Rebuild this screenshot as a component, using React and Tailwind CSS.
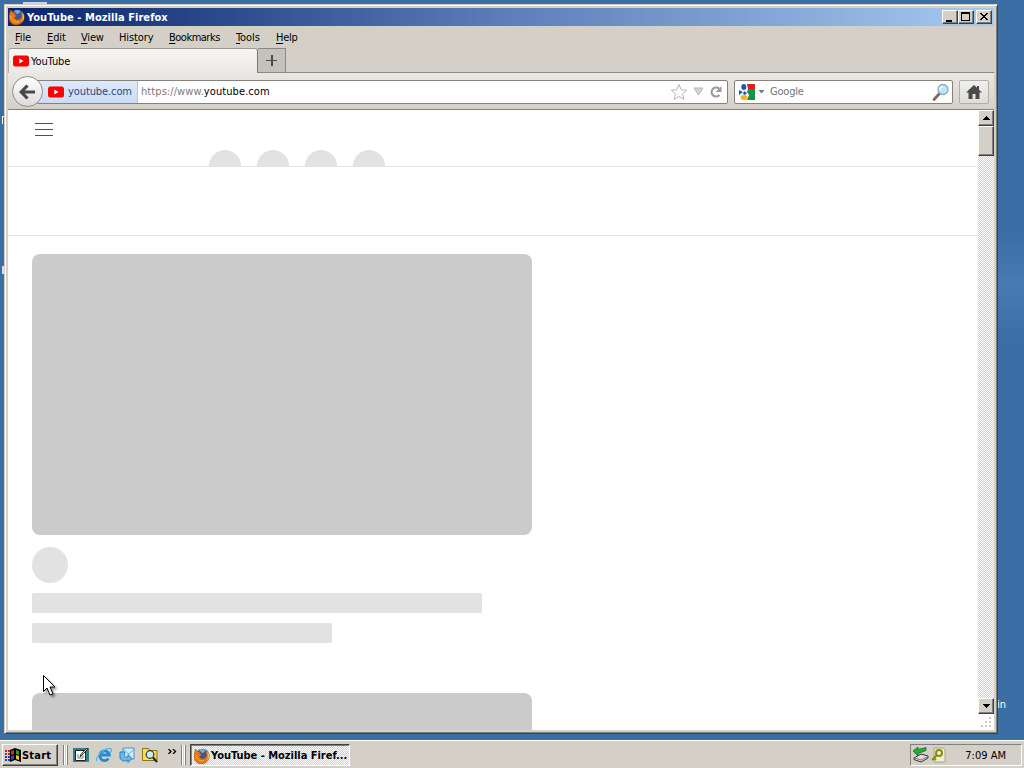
const MENU = [
  { label: "File", box: "w-[32px] tracking-[-0.1px]" },
  { label: "Edit", box: "w-[34px] tracking-[-0.1px]" },
  { label: "View", box: "w-[38px] tracking-[-0.2px]" },
  { label: "History", box: "w-[50px] tracking-[-0.1px]", hot: 3 },
  { label: "Bookmarks", box: "w-[67px] tracking-[-0.5px]" },
  { label: "Tools", box: "w-[40px] tracking-[-0.1px]" },
  { label: "Help", box: "w-[30px] tracking-[-0.3px]" },
];

const RAISED = "bg-[#d4d0c8] border border-t-white border-l-white border-r-[#404040] border-b-[#404040] shadow-[inset_-1px_-1px_0_#808080]";

export default function App() {
  return (
    <div className="relative w-[1024px] h-[768px] overflow-hidden bg-[#3a6ea5] flex flex-col justify-between text-[11px] leading-[14px] text-black font-['DejaVu_Sans_Condensed','DejaVu_Sans',sans-serif] [font-stretch:condensed]">
      {/* desktop icons peeking out behind the window */}
      <div className="absolute left-[23px] top-[2px] w-[24px] h-[2px] bg-[#c9d6ea]" />
      <div className="absolute left-[2px] top-[116px] w-[3px] h-[8px] border-l border-t border-white" />
      <div className="absolute left-[2px] top-[266px] w-[2px] h-[8px] bg-[#d5e0ec]" />
      <div className="absolute left-[997px] top-[698px] text-white">in</div>
      <div className="absolute left-[998px] top-[230px] w-[26px] h-[110px] bg-linear-to-b from-[#3a6ea5] via-[#467ab1] to-[#3a6ea5]" />

      <BrowserWindow />
      <Taskbar />
      <Cursor />
    </div>
  );
}

function BrowserWindow() {
  return (
    <div className="relative ml-[4px] mt-[4px] w-[994px] h-[730px] flex flex-col bg-[#d4d0c8] border border-[#d4d0c8] border-r-[#404040] border-b-[#404040] shadow-[inset_1px_1px_0_#fff,inset_-1px_-1px_0_#808080] p-[3px]">
      <TitleBar />
      <div className="h-[22px] shrink-0 flex items-center pl-[7px] pt-[2px]">
        {MENU.map(m => <MenuItem key={m.label} {...m} />)}
      </div>
      <TabStrip />
      <NavBar />
      <div className="flex-1 min-h-0 flex bg-white">
        <Page />
        <Scrollbar />
      </div>
    </div>
  );
}

function TitleBar() {
  return (
    <div className="h-[18px] shrink-0 flex items-center pl-[1px] pr-[2px] bg-linear-to-r from-[#0a246a] via-[#5c7db8] to-[#a6caf0]">
      <FirefoxIcon />
      <span className="ml-[2px] mt-[2px] text-white font-bold text-[11px] tracking-[0.06px] whitespace-nowrap">
        YouTube - Mozilla Firefox
      </span>
      <div className="ml-auto flex">
        <div className={`w-[16px] h-[14px] ${RAISED}`}>
          <div className="w-[6px] h-[2px] bg-black mt-[9px] ml-[3px]" />
        </div>
        <div className={`w-[16px] h-[14px] ${RAISED}`}>
          <div className="w-[9px] h-[9px] border border-t-2 border-black mt-[1px] ml-[2px]" />
        </div>
        <div className={`w-[16px] h-[14px] ml-[2px] ${RAISED}`}>
          <svg className="w-[8px] h-[7px] mt-[2px] ml-[3px]" viewBox="0 0 8 7" shapeRendering="crispEdges">
            <path d="M0 0h2v1h1v1h2V1h1V0h2v1H7v1H6v1H5v1h1v1h1v1h1v1H6V6H5V5H3v1H2v1H0V6h1V5h1V4h1V3H2V2H1V1H0z" />
          </svg>
        </div>
      </div>
    </div>
  );
}

function MenuItem({ label, box, hot = 0 }) {
  return (
    <div className={`${box} shrink-0 whitespace-nowrap`}>
      {label.slice(0, hot)}
      <span className="underline underline-offset-2 decoration-1">{label[hot]}</span>
      {label.slice(hot + 1)}
    </div>
  );
}

function TabStrip() {
  return (
    <div className="h-[25px] shrink-0 flex border-b border-[#8c8a86]">
      <div className="w-[250px] h-[25px] flex items-center pl-[4px] rounded-t-[3px] bg-linear-to-b from-[#f6f5f3] to-[#ebe9e5] border border-b-0 border-t-[#9a9894] border-l-[#b5b2ac] border-r-[#777]">
        <YouTubeIcon />
        <span className="ml-[2px] mt-[2px] tracking-[-0.1px]">YouTube</span>
      </div>
      <div className="w-[28px] h-[25px] flex items-center justify-center bg-[#c5c2bb] border border-l-0 border-[#8a8883]">
        <svg width="11" height="11" viewBox="0 0 11 11" shapeRendering="crispEdges">
          <path d="M5 0h2v5h4v1H7v5H5V6H0V5h5z" fill="#4b4b4b" />
        </svg>
      </div>
    </div>
  );
}

function NavBar() {
  return (
    <div className="h-[37px] shrink-0 flex items-center bg-linear-to-b from-[#ebe8e4] to-[#d4d0c8] border-b border-[#85827c] pt-[1px] pl-[4px] pr-[5px]">
      <div className="relative z-10 w-[31px] h-[31px] shrink-0 rounded-full border border-[#8f8d89] bg-linear-to-b from-white to-[#dddbd8] flex items-center justify-center">
        <svg width="17" height="16" viewBox="0 0 17 16">
          <path d="M8.500 1.500L2.200 8l6.300 6.500M2.500 8H16" fill="none" stroke="#45494c" strokeWidth="3.200" />
        </svg>
      </div>
      <div className="-ml-[6px] w-[691px] h-[24px] flex items-center bg-white border border-[#85827e] rounded-r-[2px]">
        <div className="h-full w-[100px] shrink-0 flex items-center pl-[10px] bg-linear-to-b from-[#dfe9fa] to-[#cbdcf5] border-r border-[#b5c5e4]">
          <YouTubeIcon />
          <span className="ml-[4px] mt-[1px] tracking-[-0.1px] text-[#1f4a83]">youtube.com</span>
        </div>
        <span className="ml-[3px] mt-[1px] tracking-[0.08px] text-[#7b7b7b] whitespace-nowrap">
          https://www.<span className="text-black">youtube.com</span>
        </span>
        <div className="ml-auto flex items-center pr-[4px]">
          <svg width="18" height="18" viewBox="0 0 18 18">
            <path d="M9 1.500l2.200 5.200 5.500.5-4.200 3.700 1.300 5.500L9 13.500l-4.800 2.900 1.300-5.500L1.300 7.200l5.500-.5z" fill="#fdfdfd" stroke="#b8b8b8" />
          </svg>
          <svg className="ml-[5px]" width="11" height="9" viewBox="0 0 11 9">
            <path d="M1 1h9L5.500 8z" fill="#d6d6d6" stroke="#b5b5b5" />
          </svg>
          <svg className="ml-[5px]" width="14" height="14" viewBox="0 0 14 14">
            <path d="M10.500 10A4.500 4.500 0 1 1 10 3.500" fill="none" stroke="#999" strokeWidth="2.200" />
            <path d="M12.500 1v6h-6z" fill="#999" />
          </svg>
        </div>
      </div>
      <div className="ml-[6px] w-[219px] h-[24px] flex items-center bg-white border border-[#85827e] rounded-[2px] pl-[4px] pr-[2px]">
        <GoogleIcon />
        <svg className="ml-[3px]" width="7" height="4" viewBox="0 0 7 4"><path d="M.5 0h6l-3 3.500z" fill="#777" /></svg>
        <span className="ml-[5px] mt-[1px] tracking-[-0.2px] text-[#757575]">Google</span>
        <svg className="ml-auto" width="18" height="18" viewBox="0 0 18 18">
          <path d="M7.500 10.500l-5.500 6" stroke="#83675a" strokeWidth="2.800" strokeLinecap="round" />
          <circle cx="11" cy="6.500" r="5" fill="#b9e8f4" stroke="#91a9bd" strokeWidth="1.300" />
          <path d="M8 6.500a3 3 0 0 1 3-3" fill="none" stroke="#fff" strokeWidth="1.500" />
        </svg>
      </div>
      <div className="ml-auto w-[30px] h-[24px] flex items-center justify-center rounded-[2px] border border-[#b1aea9] bg-linear-to-b from-[#f1efed] to-[#dfdcd8]">
        <svg width="16" height="14" viewBox="0 0 16 14">
          <path d="M8 0l3 2.800V1h2v3.700L16 7.500h-2.500V14H9.500V9h-3v5h-4V7.500H0z" fill="#474b4e" />
        </svg>
      </div>
    </div>
  );
}

function Page() {
  return (
    <div className="w-[970px] overflow-hidden">
      <div className="h-[57px] border-b border-[#e2e2e2] flex overflow-hidden">
        <div className="w-[18px] ml-[27px] mt-[13px] flex flex-col gap-[5px]">
          <div className="h-px bg-[#505050]" />
          <div className="h-px bg-[#505050]" />
          <div className="h-px bg-[#505050]" />
        </div>
        <div className="ml-[156px] mt-[40px] flex gap-[16px]">
          {[0, 1, 2, 3].map(i => (
            <div key={i} className="w-[32px] h-[32px] rounded-full bg-[#e2e2e2]" />
          ))}
        </div>
      </div>
      <div className="h-[69px] border-b border-[#e5e5e5]" />
      <div className="pt-[18px] pl-[24px]">
        <div className="w-[500px] h-[281px] rounded-[8px] bg-[#cbcbcb]" />
        <div className="mt-[12px] w-[36px] h-[36px] rounded-full bg-[#e2e2e2]" />
        <div className="mt-[10px] w-[450px] h-[20px] rounded-[2px] bg-[#e2e2e2]" />
        <div className="mt-[10px] w-[300px] h-[20px] rounded-[2px] bg-[#e2e2e2]" />
        <div className="mt-[50px] w-[500px] h-[281px] rounded-[8px] bg-[#cbcbcb]" />
      </div>
    </div>
  );
}

function Scrollbar() {
  return (
    <div className="w-[16px] flex flex-col">
      <div className={`w-[16px] h-[16px] flex items-center justify-center ${RAISED}`}>
        <svg width="7" height="4" viewBox="0 0 7 4" shapeRendering="crispEdges"><path d="M3 0h1v1h1v1h1v1h1v1H0V3h1V2h1V1h1z" /></svg>
      </div>
      <div className={`w-[16px] h-[30px] ${RAISED}`} />
      <div className="flex-1 bg-[repeating-conic-gradient(#d4d0c8_0_25%,#fff_0_50%)] bg-size-[2px_2px]" />
      <div className={`w-[16px] h-[16px] flex items-center justify-center ${RAISED}`}>
        <svg width="7" height="4" viewBox="0 0 7 4" shapeRendering="crispEdges"><path d="M0 0h7v1H6v1H5v1H4v1H3V3H2V2H1V1H0z" /></svg>
      </div>
      <svg width="16" height="16" viewBox="0 0 16 16" fill="#cdc9c1" shapeRendering="crispEdges">
        <path d="M11 3h2v2h-2zM7 7h2v2H7zM11 7h2v2h-2zM3 11h2v2H3zM7 11h2v2H7zM11 11h2v2h-2z" />
      </svg>
    </div>
  );
}

function Taskbar() {
  return (
    <div className="relative h-[28px] flex items-center bg-[#d4d0c8] border-t border-white pl-[2px] pr-[2px] pt-[1px]">
      <div className={`w-[56px] h-[22px] flex items-center pl-[2px] ${RAISED}`}>
        <WindowsLogo />
        <span className="ml-[1px] mt-[1px] font-bold text-[11px] tracking-[0.2px]">Start</span>
      </div>
      <Grip className="ml-[5px]" />
      <div className="ml-[5px] flex gap-[7px]">
        <DesktopIcon />
        <ExplorerIcon />
        <OutlookIcon />
        <SearchIcon />
      </div>
      <svg className="ml-[10px] mb-[8px]" width="9" height="5" viewBox="0 0 9 5">
        <path d="M.5 0L3 2.500.5 5M5 0l2.500 2.500L5 5" fill="none" stroke="#000" strokeWidth="1.300" />
      </svg>
      <Grip className="ml-[4px]" />
      <div className="ml-[4px] w-[160px] h-[22px] flex items-center pl-[3px] pt-[1px] border border-t-[#404040] border-l-[#404040] border-r-white border-b-white shadow-[inset_1px_1px_0_#808080] bg-[repeating-conic-gradient(#d4d0c8_0_25%,#fff_0_50%)] bg-size-[2px_2px]">
        <FirefoxIcon />
        <span className="ml-[1px] mt-[1px] font-bold text-[11px] tracking-[-0.02px] whitespace-nowrap">YouTube - Mozilla Firef...</span>
      </div>
      <div className="ml-auto w-[112px] h-[22px] flex items-center pl-[2px] border border-t-[#808080] border-l-[#808080] border-r-white border-b-white">
        <svg width="16" height="16" viewBox="0 0 16 16">
          <path d="M1 11l7-4 7 2v2l-7 4-7-2.500z" fill="#ddd" stroke="#333" />
          <path d="M2 11l6 2 6-3" fill="none" stroke="#777" />
          <path d="M0 4l5-4v2.500l8-2v3L5 6.500V9z" fill="#22b233" stroke="#075b14" strokeWidth=".7" />
        </svg>
        <svg className="ml-[2px]" width="16" height="16" viewBox="0 0 16 16">
          <path d="M3 1h9l2 2v12H3z" fill="#efeccf" stroke="#aaa687" />
          <circle cx="8" cy="6" r="3" fill="none" stroke="#8b8a17" strokeWidth="2" />
          <path d="M6 8l-5 5M3 11l2 2" stroke="#8b8a17" strokeWidth="2" />
        </svg>
        <span className="ml-auto mr-[15px] mt-[2px] whitespace-nowrap">7:09 AM</span>
      </div>
    </div>
  );
}

function Grip({ className }) {
  return (
    <div className={`${className} flex h-[20px]`}>
      <div className="w-px bg-[#808080]" />
      <div className="w-px bg-white" />
      <div className="w-px ml-[1px] bg-white" />
      <div className="w-px bg-[#808080]" />
    </div>
  );
}

function YouTubeIcon() {
  return (
    <svg className="shrink-0" width="16" height="16" viewBox="0 0 16 16">
      <rect y="2.500" width="16" height="11" rx="2.500" fill="#f00" />
      <path d="M6.300 5.500v5l4.200-2.500z" fill="#fff" />
    </svg>
  );
}

function FirefoxIcon() {
  return (
    <svg className="shrink-0" width="16" height="16" viewBox="0 0 16 16">
      <circle cx="8.500" cy="7.500" r="6.800" fill="#315d9e" />
      <path d="M5 2c2-2 6-1 7 1-2 0-2 2-4 2z" fill="#78acd8" />
      <path d="M1.500 1L4 3.500l2.500.3-1 2 2.500.7-2.500 2c1 3 5 3 6.500.5 1-2 .5-4-.5-5.500 4 1 4.500 5 3 8-2 4-7 5.500-11 3.500C0 13-1 8 .8 4z" fill="#e77818" stroke="#a8440c" strokeWidth=".5" />
      <path d="M12.500 2.500c3 3 3.500 7.500.5 10.500 1-3 1.500-7-.5-10.500z" fill="#fbc545" />
      <path d="M2 7c0 4 4 7 8 5.500" fill="none" stroke="#f9ad35" />
    </svg>
  );
}

function GoogleIcon() {
  return (
    <svg className="shrink-0" width="16" height="16" viewBox="0 0 16 16">
      <path d="M8 0h8v5H9z" fill="#db2025" />
      <path d="M9 5h7v11H8l2-5-2-3z" fill="#149447" />
      <ellipse cx="4.800" cy="3" rx="2.500" ry="3" fill="#1d59b3" />
      <path d="M0 6l4 2-4 3zM5 7l3 2-2 2-2-1z" fill="#1d59b3" />
      <ellipse cx="5" cy="13.500" rx="3.500" ry="2.500" fill="#f4b51b" />
    </svg>
  );
}

function WindowsLogo() {
  return (
    <svg width="16" height="16" viewBox="0 0 16 16">
      <path d="M5 3l5-2 6 2v12l-6-2-5 2z" />
      <path d="M6 4l3-1v4L6 8z" fill="#e3261d" />
      <path d="M11 3l3 1v4l-3-1z" fill="#2a9e2d" />
      <path d="M6 9l3-1v4l-3 1z" fill="#254cc4" />
      <path d="M11 8l3 1v4l-3-1z" fill="#e9c91c" />
      <path d="M0 4h2M3 4h2M0 7h2M3 7h2" stroke="#c72323" strokeWidth="2" />
      <path d="M0 10h2M3 10h2M0 13h2M3 13h2" stroke="#203fb3" strokeWidth="2" />
    </svg>
  );
}

function DesktopIcon() {
  return (
    <svg width="16" height="16" viewBox="0 0 16 16">
      <path d="M0 1h16v14H0z" fill="#347e86" />
      <path d="M2.500 3.500h10v10h-10z" fill="#fff" stroke="#222" />
      <path d="M5 7v4h5V8" fill="none" stroke="#777" />
      <path d="M7 10l1-3 6-6 1 1-6 6z" fill="#f2d36b" stroke="#111" strokeWidth=".8" />
    </svg>
  );
}

function ExplorerIcon() {
  return (
    <svg width="16" height="16" viewBox="0 0 16 16">
      <path d="M12.500 11.500a4.800 4.800 0 1 1 .8-3.500H5" fill="none" stroke="#218bd0" strokeWidth="2.800" />
      <path d="M1 14C-1 10 10-1 15 2c1 1 0 3-1 4" fill="none" stroke="#58b4e8" strokeWidth="1.300" />
    </svg>
  );
}

function OutlookIcon() {
  return (
    <svg width="16" height="16" viewBox="0 0 16 16">
      <path d="M4 1h11v11H4z" fill="#d3eafa" stroke="#4a94cc" />
      <path d="M4 2l6 5 5-5" fill="none" stroke="#76aed4" />
      <path d="M1 5v6c1 3 5 4 8 2v2.500l4-4-4-4V10c-3 1-4-1-3-5z" fill="#6ab8e7" stroke="#2a7fc0" />
    </svg>
  );
}

function SearchIcon() {
  return (
    <svg width="16" height="16" viewBox="0 0 16 16">
      <path d="M.5 1.500h6l1 2h7.500v10H.5z" fill="#f5dd55" stroke="#8c7615" />
      <circle cx="8" cy="7.500" r="3.800" fill="#c5edf5" stroke="#333" strokeWidth="1.200" />
      <path d="M11 10.500l4 4.500" stroke="#222" strokeWidth="2" />
    </svg>
  );
}

function Cursor() {
  return (
    <svg className="absolute left-[43px] top-[675px] drop-shadow-[2px_2px_1px_rgba(0,0,0,0.4)]" width="13" height="22" viewBox="0 0 13 22">
      <path d="M.5.5v16l3.500-3.500 3 7 3-1-3-7h5z" fill="#fff" stroke="#000" />
    </svg>
  );
}
